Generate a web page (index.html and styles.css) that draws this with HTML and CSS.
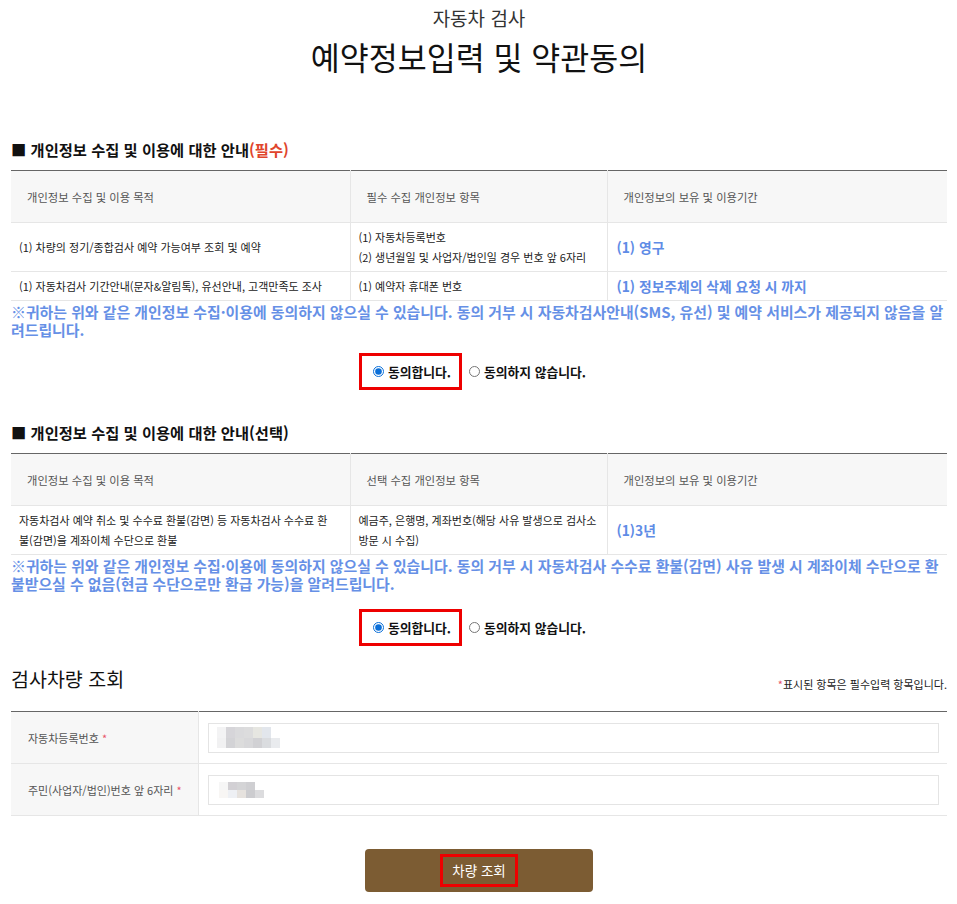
FILE: index.html
```html
<!DOCTYPE html>
<html lang="ko">
<head>
<meta charset="utf-8">
<title>예약정보입력 및 약관동의</title>
<link rel="stylesheet" href="styles.css">
</head>
<body>
<div class="page">
  <header class="top">
    <p class="sub">자동차 검사</p>
    <h1 class="title">예약정보입력 및 약관동의</h1>
  </header>

  <section class="terms terms-first">
    <h2 class="sec-h">■ 개인정보 수집 및 이용에 대한 안내<span class="req">(필수)</span></h2>
    <table class="info">
      <colgroup><col class="c1"><col class="c2"><col class="c3"></colgroup>
      <thead>
        <tr><th>개인정보 수집 및 이용 목적</th><th>필수 수집 개인정보 항목</th><th>개인정보의 보유 및 이용기간</th></tr>
      </thead>
      <tbody>
        <tr>
          <td>(1) 차량의 정기/종합검사 예약 가능여부 조회 및 예약</td>
          <td>(1) 자동차등록번호<br>(2) 생년월일 및 사업자/법인일 경우 번호 앞 6자리</td>
          <td class="period">(1) 영구</td>
        </tr>
        <tr>
          <td>(1) 자동차검사 기간안내(문자&amp;알림톡), 유선안내, 고객만족도 조사</td>
          <td>(1) 예약자 휴대폰 번호</td>
          <td class="period">(1) 정보주체의 삭제 요청 시 까지</td>
        </tr>
      </tbody>
    </table>
    <p class="notice">※귀하는 위와 같은 개인정보 수집·이용에 동의하지 않으실 수 있습니다. 동의 거부 시 자동차검사안내(SMS, 유선) 및 예약 서비스가 제공되지 않음을 알려드립니다.</p>
    <div class="agree">
      <label class="opt opt-on"><input type="radio" name="a1" checked>동의합니다.</label>
      <label class="opt"><input type="radio" name="a1">동의하지 않습니다.</label>
    </div>
  </section>

  <section class="terms terms-second">
    <h2 class="sec-h">■ 개인정보 수집 및 이용에 대한 안내(선택)</h2>
    <table class="info">
      <colgroup><col class="c1"><col class="c2"><col class="c3"></colgroup>
      <thead>
        <tr><th>개인정보 수집 및 이용 목적</th><th>선택 수집 개인정보 항목</th><th>개인정보의 보유 및 이용기간</th></tr>
      </thead>
      <tbody>
        <tr>
          <td>자동차검사 예약 취소 및 수수료 환불(감면) 등 자동차검사 수수료 환불(감면)을 계좌이체 수단으로 환불</td>
          <td>예금주, 은행명, 계좌번호(해당 사유 발생으로 검사소 방문 시 수집)</td>
          <td class="period">(1)3년</td>
        </tr>
      </tbody>
    </table>
    <p class="notice">※귀하는 위와 같은 개인정보 수집·이용에 동의하지 않으실 수 있습니다. 동의 거부 시 자동차검사 수수료 환불(감면) 사유 발생 시 계좌이체 수단으로 환불받으실 수 없음(현금 수단으로만 환급 가능)을 알려드립니다.</p>
    <div class="agree agree-second">
      <label class="opt opt-on"><input type="radio" name="a2" checked>동의합니다.</label>
      <label class="opt"><input type="radio" name="a2">동의하지 않습니다.</label>
    </div>
  </section>

  <section class="lookup">
    <div class="lookup-head">
      <h2 class="lookup-title">검사차량 조회</h2>
      <p class="hint"><span class="star">*</span>표시된 항목은 필수입력 항목입니다.</p>
    </div>
    <table class="form">
      <colgroup><col class="f1"><col class="f2"></colgroup>
      <tbody>
        <tr>
          <th>자동차등록번호 <span class="star">*</span></th>
          <td>
            <div class="field">
              <div class="mosaic m1">
                <i style="background:#f3f3f4"></i><i style="background:#d6d5d9"></i><i style="background:#dadadc"></i><i style="background:#dcdcdd"></i><i style="background:#e6e6e1"></i><i style="background:#e2e6ec"></i><i style="background:#ffffff"></i>
                <i style="background:#f1f1f2"></i><i style="background:#d3d3d6"></i><i style="background:#dcdcdc"></i><i style="background:#d8d8da"></i><i style="background:#d1d1d4"></i><i style="background:#dadcdf"></i><i style="background:#e9ebee"></i>
              </div>
            </div>
          </td>
        </tr>
        <tr>
          <th>주민(사업자/법인)번호 앞 6자리 <span class="star">*</span></th>
          <td>
            <div class="field">
              <div class="mosaic m2">
                <i style="background:#f6f6f6"></i><i style="background:#d2d0d4"></i><i style="background:#d4d4d6"></i><i style="background:#cfcfd2"></i><i style="background:#ffffff"></i>
                <i style="background:#f8f6f4"></i><i style="background:#eef0f4"></i><i style="background:#e6e2de"></i><i style="background:#cccccf"></i><i style="background:#dcdcde"></i>
              </div>
            </div>
          </td>
        </tr>
      </tbody>
    </table>
    <div class="actions">
      <button type="button" class="btn"><span class="btn-hl">차량 조회</span></button>
    </div>
  </section>
</div>
</body>
</html>
```

FILE: styles.css
```css
* { box-sizing: border-box; }

body {
  margin: 0;
  background: #fff;
  color: #222;
  font-family: "Noto Sans CJK KR", "Noto Sans", sans-serif;
}

.page {
  width: 936px;
  margin-left: 11px;
  padding-top: 6px;
  padding-bottom: 12px;
}

.top { text-align: center; }

.sub {
  margin: 0;
  font-size: 19px;
  line-height: 24px;
  color: #333;
}

.title {
  margin: 6px 0 0;
  font-size: 31.5px;
  line-height: 40px;
  font-weight: normal;
  color: #111;
}

.terms-first { margin-top: 63px; }
.terms-second { margin-top: 32px; }

.sec-h {
  margin: 0 0 11px;
  font-size: 15.3px;
  line-height: 20px;
  font-weight: bold;
  color: #111;
}

.req { color: #e0452c; }

.info {
  width: 100%;
  border-collapse: collapse;
  table-layout: fixed;
  border-top: 1px solid #666;
}

.info .c1 { width: 339px; }
.info .c2 { width: 257px; }
.info .c3 { width: 340px; }

.info th {
  height: 52px;
  padding: 0 16px;
  background: #f7f7f7;
  text-align: left;
  font-weight: normal;
  font-size: 11.3px;
  color: #555;
  border-bottom: 1px solid #e6e6e6;
}

.info td {
  padding: 4px 8px;
  font-size: 11px;
  line-height: 20px;
  color: #222;
  vertical-align: middle;
  border-bottom: 1px solid #e6e6e6;
}

.info td:first-child { padding-right: 14px; }

.info th + th,
.info td + td { border-left: 1px solid #e6e6e6; }

.info td.period {
  padding-left: 9px;
  font-size: 13.8px;
  font-weight: bold;
  color: #5f8ce6;
}

.notice {
  margin: 2px 0 0;
  font-size: 14.9px;
  line-height: 18px;
  font-weight: bold;
  color: #6690e6;
}

.agree {
  display: flex;
  justify-content: center;
  align-items: center;
  gap: 7px;
  margin-top: 14px;
  padding-right: 13px;
}

.agree-second { margin-top: 16px; }

.opt {
  display: flex;
  align-items: center;
  gap: 4px;
  padding: 8px 0;
  line-height: 15px;
  font-size: 12.8px;
  font-weight: bold;
  color: #111;
}

.opt input {
  width: 11px;
  height: 11px;
  margin: 0;
  accent-color: #0b6fd8;
}

.opt-on {
  border: 3px solid #ee0000;
  padding: 8px 8px 8px 11px;
}

.lookup { margin-top: 21px; }

.lookup-head {
  display: flex;
  justify-content: space-between;
  align-items: flex-end;
}

.lookup-title {
  margin: 0;
  font-size: 19.5px;
  line-height: 24px;
  font-weight: normal;
  color: #111;
}

.hint {
  margin: 0;
  font-size: 11px;
  line-height: 14px;
  color: #222;
}

.star { color: #e8546a; }

.form {
  width: 100%;
  margin-top: 20px;
  border-collapse: collapse;
  table-layout: fixed;
  border-top: 1px solid #666;
}

.form .f1 { width: 187px; }

.form th {
  padding: 0 8px 0 17px;
  background: #f7f7f7;
  text-align: left;
  font-weight: normal;
  font-size: 11px;
  color: #555;
  border-right: 1px solid #e6e6e6;
  border-bottom: 1px solid #e6e6e6;
}

.form td {
  height: 52px;
  padding: 0 8px 0 9px;
  border-bottom: 1px solid #e6e6e6;
}

.field {
  height: 30px;
  border: 1px solid #e4e4e4;
  padding: 0 8px;
  display: flex;
  align-items: center;
}

.mosaic { display: grid; }
.mosaic i { display: block; }

.m1 { grid-template-columns: repeat(7, 9px); grid-auto-rows: 10.5px; }
.m2 { grid-template-columns: repeat(5, 9px); grid-auto-rows: 8px; margin-left: 2px; }

.actions {
  display: flex;
  justify-content: center;
  margin-top: 33px;
}

.btn {
  width: 228px;
  height: 43px;
  border: 0;
  border-radius: 4px;
  background: #7c5c33;
  display: flex;
  align-items: center;
  justify-content: center;
  padding: 0;
  font-family: inherit;
  cursor: pointer;
}

.btn-hl {
  display: block;
  height: 33px;
  line-height: 27px;
  padding: 0 9px;
  border: 3px solid #ee0000;
  color: #fff;
  font-size: 13.5px;
}
```
